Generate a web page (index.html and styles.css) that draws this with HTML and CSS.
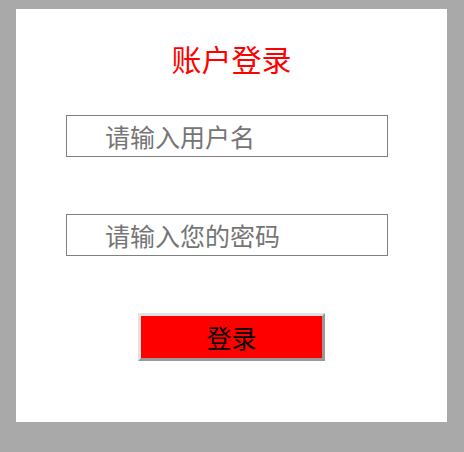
FILE: index.html
```html
<!DOCTYPE html>
<html lang="zh-CN">

<head>
  <meta charset="UTF-8" />
  <meta name="viewport" content="width=device-width, initial-scale=1.0" />
  <title>账户登录</title>
  <link rel="stylesheet" href="styles.css">
</head>

<body>
  <div class="login-box">
    <h1 class="login-title">账户登录</h1>
    <form class="login-form">
      <input class="input-field" type="text" placeholder="请输入用户名" />
      <input class="input-field" type="password" placeholder="请输入您的密码" />
      <button class="btn-login" type="button">登录</button>
    </form>
  </div>
</body>

</html>
```

FILE: styles.css
```css
:root {
  --color-page: #a9a9a9;
  --color-box: #fff;
  --color-red: #f00;
  --color-border: #808080;
  --color-placeholder: #757575;
  --font-base: "Noto Sans CJK SC", "Noto Sans", sans-serif;
}

* {
  box-sizing: border-box;
  margin: 0;
  padding: 0;
}

body {
  background-color: var(--color-page);
  font-family: var(--font-base);
  padding: 9px 17px 0 16px;
}

.login-box {
  background-color: var(--color-box);
  width: 431px;
  height: 413px;
  padding-top: 29px;
}

.login-title {
  color: var(--color-red);
  font-size: 30px;
  font-weight: 400;
  line-height: 40px;
  text-align: center;
}

.login-form {
  display: flex;
  flex-direction: column;
  padding-top: 37px;
}

.input-field {
  width: 322px;
  height: 42px;
  margin-left: 50px;
  margin-bottom: 57px;
  border: 1px solid var(--color-border);
  padding-left: 38px;
  font-family: inherit;
  font-size: 25px;
  outline: none;
}

.input-field::placeholder {
  color: var(--color-placeholder);
}

.btn-login {
  align-self: center;
  width: 187px;
  height: 48px;
  background-color: var(--color-red);
  border: 3px solid;
  border-color: #e3e3e3 #999 #999 #e3e3e3;
  color: #000;
  font-family: inherit;
  font-size: 25px;
  cursor: pointer;
}
```
